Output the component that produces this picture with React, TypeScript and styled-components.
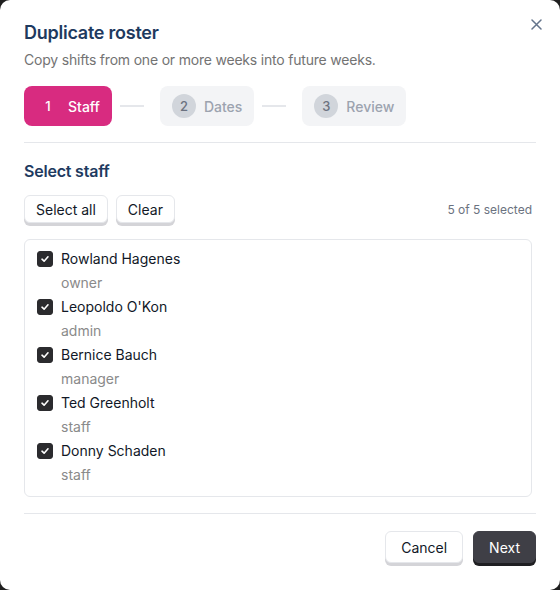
import React, { useState } from "react";
import styled, { createGlobalStyle } from "styled-components";

const Global = createGlobalStyle`
  html, body { margin: 0; padding: 0; background: #1f1f1f; }
  body { font-family: Inter, "Noto Sans", "Liberation Sans", sans-serif; -webkit-font-smoothing: antialiased; }
  * { box-sizing: border-box; }
`;

const Dialog = styled.div`
  position: relative;
  width: 560px;
  height: 590px;
  background: #ffffff;
  border-radius: 10px;
  padding: 20px 24px 24px;
  display: flex;
  flex-direction: column;
`;

const Close = styled.button`
  position: absolute;
  top: 16px;
  right: 16px;
  width: 16px;
  height: 16px;
  border: 0;
  background: transparent;
  padding: 0;
  display: flex;
  align-items: center;
  justify-content: center;
  color: #64748b;
  cursor: pointer;
`;

const Title = styled.h2`
  margin: 0;
  font-size: 18px;
  line-height: 26px;
  font-weight: 600;
  letter-spacing: -0.25px;
  color: #1e3a5f;
`;

const Subtitle = styled.p`
  margin: 4px 0 0;
  font-size: 14px;
  line-height: 20px;
  letter-spacing: -0.2px;
  color: #737373;
`;

const Steps = styled.div`
  margin-top: 16px;
  display: flex;
  align-items: center;
  gap: 8px;
`;

const Step = styled.div<{ $active?: boolean }>`
  height: 40px;
  padding: 0 12px;
  border-radius: 8px;
  display: flex;
  align-items: center;
  gap: 8px;
  background: ${(p) => (p.$active ? "#d82b80" : "#f3f4f6")};
  color: ${(p) => (p.$active ? "#ffffff" : "#9ca3af")};
  font-size: 14px;
  font-weight: 500;
`;

const StepNum = styled.span<{ $active?: boolean }>`
  width: 24px;
  height: 24px;
  border-radius: 50%;
  display: flex;
  align-items: center;
  justify-content: center;
  font-size: 13px;
  font-weight: 500;
  background: ${(p) => (p.$active ? "transparent" : "#d1d5db")};
  color: ${(p) => (p.$active ? "#ffffff" : "#6b7280")};
`;

const Connector = styled.span`
  width: 24px;
  height: 2px;
  background: #e5e7eb;
  margin-right: 8px;
`;

const Divider = styled.hr`
  margin: 16px 0 0;
  border: 0;
  border-top: 1px solid #e5e7eb;
`;

const Body = styled.div`
  padding-right: 4px;
  display: flex;
  flex-direction: column;
`;

const SectionTitle = styled.h3`
  margin: 16px 0 0;
  font-size: 16px;
  line-height: 24px;
  font-weight: 600;
  letter-spacing: -0.2px;
  color: #1e3a5f;
`;

const Toolbar = styled.div`
  margin-top: 12px;
  display: flex;
  align-items: center;
  gap: 8px;
`;

const Button = styled.button<{ $primary?: boolean; $size?: "sm" | "md" }>`
  height: ${(p) => (p.$size === "md" ? "32px" : "28px")};
  padding: 0 ${(p) => (p.$size === "md" ? "15px" : "11px")};
  border-radius: 6px;
  font-family: inherit;
  font-size: 14px;
  font-weight: 400;
  cursor: pointer;
  border: 1px solid ${(p) => (p.$primary ? "#3f3f46" : "#e5e7eb")};
  background: ${(p) => (p.$primary ? "#3f3f46" : "#ffffff")};
  color: ${(p) => (p.$primary ? "#ffffff" : "#111827")};
  box-shadow: 0 3px 0 ${(p) => (p.$primary ? "#1f1f22" : "#d4d4d8")};
`;

const Count = styled.span`
  margin-left: auto;
  font-size: 12px;
  color: #6b7280;
`;

const List = styled.div`
  margin-top: 16px;
  border: 1px solid #e5e7eb;
  border-radius: 6px;
  padding: 7px 12px 9px;
  display: flex;
  flex-direction: column;
`;

const Item = styled.label`
  display: grid;
  grid-template-columns: 16px 1fr;
  column-gap: 8px;
  align-items: center;
  cursor: pointer;
`;

const Box = styled.span<{ $checked: boolean }>`
  width: 16px;
  height: 16px;
  border-radius: 3px;
  background: ${(p) => (p.$checked ? "#2b2b2e" : "#ffffff")};
  border: 1px solid ${(p) => (p.$checked ? "#2b2b2e" : "#9ca3af")};
  display: flex;
  align-items: center;
  justify-content: center;
`;

const Name = styled.span`
  font-size: 14px;
  line-height: 24px;
  color: #111827;
`;

const Role = styled.span`
  grid-column: 2;
  font-size: 14px;
  line-height: 24px;
  color: #8a8a8a;
`;

const Footer = styled.div`
  margin-top: 16px;
  border-top: 1px solid #e5e7eb;
  padding-top: 17px;
  display: flex;
  justify-content: flex-end;
  gap: 10px;
`;

const staff = [
  { name: "Rowland Hagenes", role: "owner" },
  { name: "Leopoldo O'Kon", role: "admin" },
  { name: "Bernice Bauch", role: "manager" },
  { name: "Ted Greenholt", role: "staff" },
  { name: "Donny Schaden", role: "staff" },
];

export default function App() {
  const [sel, setSel] = useState<boolean[]>(staff.map(() => true));
  const count = sel.filter(Boolean).length;
  return (
    <>
      <Global />
      <Dialog>
        <Close aria-label="Close">
          <svg width="11" height="11" viewBox="0 0 11 11" fill="none" stroke="currentColor" strokeWidth="1.5" strokeLinecap="round">
            <path d="M1 1L10 10M10 1L1 10" />
          </svg>
        </Close>
        <Title>Duplicate roster</Title>
        <Subtitle>Copy shifts from one or more weeks into future weeks.</Subtitle>
        <Steps>
          <Step $active>
            <StepNum $active>1</StepNum>Staff
          </Step>
          <Connector />
          <Step>
            <StepNum>2</StepNum>Dates
          </Step>
          <Connector />
          <Step>
            <StepNum>3</StepNum>Review
          </Step>
        </Steps>
        <Divider />
        <Body>
          <SectionTitle>Select staff</SectionTitle>
          <Toolbar>
            <Button onClick={() => setSel(staff.map(() => true))}>Select all</Button>
            <Button onClick={() => setSel(staff.map(() => false))}>Clear</Button>
            <Count>
              {count} of {staff.length} selected
            </Count>
          </Toolbar>
          <List>
            {staff.map((s, i) => (
              <Item key={s.name} onClick={() => setSel(sel.map((v, j) => (j === i ? !v : v)))}>
                <Box $checked={sel[i]}>
                  {sel[i] && (
                    <svg width="10" height="10" viewBox="0 0 10 10" fill="none" stroke="#fff" strokeWidth="1.6" strokeLinecap="round" strokeLinejoin="round">
                      <path d="M2 5.2L4.1 7.2L8 2.8" />
                    </svg>
                  )}
                </Box>
                <Name>{s.name}</Name>
                <Role>{s.role}</Role>
              </Item>
            ))}
          </List>
        </Body>
        <Footer>
          <Button $size="md">Cancel</Button>
          <Button $primary $size="md">Next</Button>
        </Footer>
      </Dialog>
    </>
  );
}
